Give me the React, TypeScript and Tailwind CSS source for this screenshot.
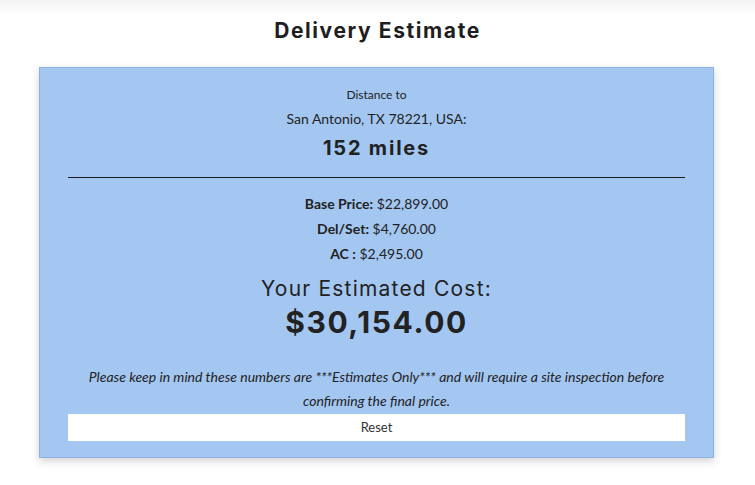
const lato = "font-['Lato','Liberation_Sans',sans-serif]";
const head = "font-['Inter','Noto_Sans',sans-serif]";

const PriceLine = ({ label, value }: { label: string; value: string }) => (
  <p className="h-[25px] leading-[25px]">
    <span className="font-bold">{label}</span> {value}
  </p>
);

const App = () => {
  return (
    <div className={`min-h-[485px] bg-white text-[#222] ${lato}`}>
      <div className="h-[14px] bg-gradient-to-b from-[#f3f3f3] to-white" />
      <h1 className={`${head} text-center text-[21px] font-bold leading-[34px] tracking-[1.6px] text-[#1e1e1e]`}>
        Delivery Estimate
      </h1>
      <div className="mx-[39px] mt-[19px] w-[675px] border border-[#8db0de] bg-[#a4c7f2] px-[28px] pt-[16px] pb-[16px] text-center shadow-[0_3px_8px_rgba(0,0,0,0.18)]">
        <p className="text-[12px] leading-[22px]">Distance to</p>
        <p className="text-[14px] leading-[26px]">San Antonio, TX 78221, USA:</p>
        <p className={`${head} text-[20px] font-bold leading-[32px] tracking-[1.8px]`}>152 miles</p>
        <div className="mt-[13px] h-px bg-[#1c1c1c]" />
        <div className="mt-[13px] text-[14px]">
          <PriceLine label="Base Price:" value="$22,899.00" />
          <PriceLine label="Del/Set:" value="$4,760.00" />
          <PriceLine label="AC :" value="$2,495.00" />
        </div>
        <p className={`${head} mt-[9px] text-[21px] leading-[28px] tracking-[1.2px]`}>Your Estimated Cost:</p>
        <p className={`${head} text-[30px] font-bold leading-[38px] tracking-[1.6px]`}>$30,154.00</p>
        <p className="mx-auto mt-[24px] max-w-[600px] text-[14px] italic leading-[24px]">
          Please keep in mind these numbers are ***Estimates Only*** and will require a site inspection before confirming the final price.
        </p>
        <button className="mt-px block h-[27px] w-full bg-white text-[13px] text-[#333]">Reset</button>
      </div>
    </div>
  );
};

export default App;
